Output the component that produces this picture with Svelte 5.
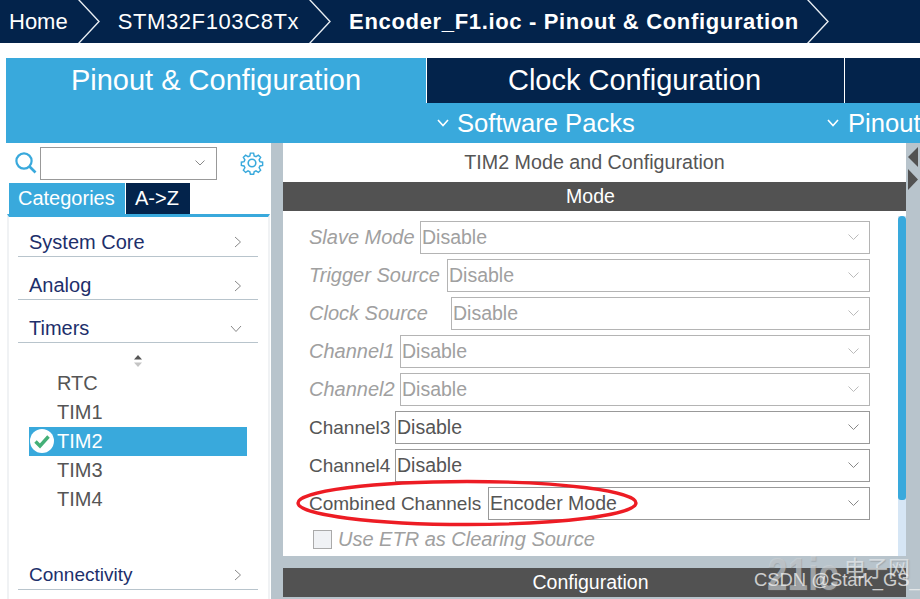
<script>
  const crumbs = [
    { label: "Home", cls: "" },
    { label: "STM32F103C8Tx", cls: "chip" },
    { label: "Encoder_F1.ioc - Pinout & Configuration", cls: "bold" },
  ];

  const timers = ["RTC", "TIM1", "TIM2", "TIM3", "TIM4"];

  // labelWidth puts the select where STM32CubeMX leaves it for that row
  const modeRows = [
    { label: "Slave Mode", value: "Disable", labelWidth: 111, off: true },
    { label: "Trigger Source", value: "Disable", labelWidth: 138, off: true },
    { label: "Clock Source", value: "Disable", labelWidth: 142, off: true },
    { label: "Channel1", value: "Disable", labelWidth: 91, off: true },
    { label: "Channel2", value: "Disable", labelWidth: 91, off: true },
    { label: "Channel3", value: "Disable", labelWidth: 86 },
    { label: "Channel4", value: "Disable", labelWidth: 86 },
    { label: "Combined Channels", value: "Encoder Mode", labelWidth: 179 },
  ];
</script>

<div class="page">
  <nav class="crumbs">
    {#each crumbs as crumb}
      <span class="crumb {crumb.cls}">{crumb.label}</span>
      <svg class="crumb-arrow" width="22" height="43" viewBox="0 0 22 43">
        <path d="M0 -1 L21 21.5 L0 44" fill="none" stroke="#e8edf2" stroke-width="1.4" />
      </svg>
    {/each}
  </nav>

  <div class="tabs">
    <div class="tab active">Pinout &amp; Configuration</div>
    <div class="tab clock">Clock Configuration</div>
    <div class="tab rest"></div>
  </div>

  <div class="subbar">
    <svg class="sub-chev" width="12" height="8" viewBox="0 0 12 8">
      <path d="M1 1 L6 6.5 L11 1" fill="none" stroke="#fff" stroke-width="1.6" />
    </svg>
    <span class="sub-label packs">Software Packs</span>
    <svg class="sub-chev second" width="12" height="8" viewBox="0 0 12 8">
      <path d="M1 1 L6 6.5 L11 1" fill="none" stroke="#fff" stroke-width="1.6" />
    </svg>
    <span class="sub-label">Pinout</span>
  </div>

  <div class="body">
    <aside class="side">
      <div class="search">
        <svg width="22" height="22" viewBox="0 0 22 22">
          <circle cx="9" cy="9" r="7.6" fill="none" stroke="#39a9dc" stroke-width="2.2" />
          <path d="M14.5 14.5 L20.5 20.5" stroke="#39a9dc" stroke-width="2.6" />
        </svg>
        <div class="search-box">
          <svg width="10" height="6" viewBox="0 0 10 6">
            <path d="M0.5 0.5 L5 5 L9.5 0.5" fill="none" stroke="#888" stroke-width="1" />
          </svg>
        </div>
        <svg class="gear" width="24" height="24" viewBox="0 0 24 24">
          <g fill="none" stroke="#39a9dc" stroke-width="1.6">
            <circle cx="12" cy="12" r="3.8" />
            <path d="M10.2 1 h3.6 l0.6 3.1 l2 0.9 l2.7 -1.7 l2.5 2.5 l-1.7 2.7 l0.9 2 l3 0.6 v3.6 l-3 0.6 l-0.9 2 l1.7 2.7 l-2.5 2.5 l-2.7 -1.7 l-2 0.9 l-0.6 2.9 h-3.6 l-0.6 -2.9 l-2 -0.9 l-2.7 1.7 l-2.5 -2.5 l1.7 -2.7 l-0.9 -2 l-3 -0.6 v-3.6 l3 -0.6 l0.9 -2 l-1.7 -2.7 l2.5 -2.5 l2.7 1.7 l2 -0.9 z" transform="translate(1.2 1.2) scale(0.9)" />
          </g>
        </svg>
      </div>

      <div class="side-tabs">
        <span class="side-tab on">Categories</span>
        <span class="side-tab">A-&gt;Z</span>
      </div>

      <div class="tree">
        <div class="group first">
          <span>System Core</span>
          <svg width="8" height="12" viewBox="0 0 8 12"><path d="M1 1 L6.5 6 L1 11" fill="none" stroke="#888" stroke-width="1" /></svg>
        </div>
        <div class="group">
          <span>Analog</span>
          <svg width="8" height="12" viewBox="0 0 8 12"><path d="M1 1 L6.5 6 L1 11" fill="none" stroke="#888" stroke-width="1" /></svg>
        </div>
        <div class="group">
          <span>Timers</span>
          <svg width="12" height="8" viewBox="0 0 12 8"><path d="M1 1 L6 6.5 L11 1" fill="none" stroke="#888" stroke-width="1" /></svg>
        </div>

        <svg class="sort" width="10" height="12" viewBox="0 0 10 12">
          <path d="M5 0 L9 4.5 H1 Z" fill="#555" />
          <path d="M5 12 L9 7.5 H1 Z" fill="#c4c4c4" />
        </svg>

        <ul class="items">
          {#each timers as name}
            <li class:selected={name === "TIM2"}>
              {#if name === "TIM2"}
                <svg class="check" width="24" height="24" viewBox="0 0 24 24">
                  <circle cx="12" cy="12" r="12" fill="#fff" />
                  <path d="M5.5 12.5 L10 17 L18.5 7.5" fill="none" stroke="#45b078" stroke-width="3.4" />
                </svg>
              {/if}
              {name}
            </li>
          {/each}
        </ul>

        <div class="group connectivity">
          <span>Connectivity</span>
          <svg width="8" height="12" viewBox="0 0 8 12"><path d="M1 1 L6.5 6 L1 11" fill="none" stroke="#888" stroke-width="1" /></svg>
        </div>
      </div>
    </aside>

    <main class="main">
      <div class="title">TIM2 Mode and Configuration</div>
      <div class="section">Mode</div>
      <div class="mode">
        <div class="form">
          {#each modeRows as row}
            <div class="row" class:off={row.off}>
              <span class="row-label" style="width: {row.labelWidth}px">{row.label}</span>
              <div class="select">
                <span>{row.value}</span>
                <svg width="11" height="7" viewBox="0 0 11 7">
                  <path d="M0.5 0.5 L5.5 5.5 L10.5 0.5" fill="none" stroke={row.off ? "#bbb" : "#888"} stroke-width="1" />
                </svg>
              </div>
            </div>
          {/each}
          <label class="etr">
            <span class="box"></span>
            <span>Use ETR as Clearing Source</span>
          </label>
        </div>
        <div class="scroll"><div class="thumb"></div></div>
      </div>
      <div class="section config">Configuration</div>
    </main>

    <div class="strip">
      <svg width="12" height="44" viewBox="0 0 12 44">
        <path d="M11 0 V20 L1 10 Z" fill="#525252" />
        <path d="M1 22 V43 L11 32.5 Z" fill="#525252" />
      </svg>
    </div>
  </div>

  <!-- annotation and watermarks over the screenshot -->
  <svg class="ring" width="346" height="50" viewBox="0 0 346 50">
    <ellipse cx="173" cy="25" rx="169" ry="21.5" fill="none" stroke="#ed1c24" stroke-width="3.4" />
  </svg>
  <div class="mark-21ic"><b>21ic</b><span>电子网</span></div>
  <div class="mark-csdn">CSDN @Stark_GS_</div>
</div>

<style>
  :global(body) {
    margin: 0;
  }

  .page {
    position: relative;
    width: 920px;
    height: 599px;
    overflow: hidden;
    background: #fff;
    font-family: "Liberation Sans", Arial, sans-serif;
    color: #555;
    display: flex;
    flex-direction: column;
  }

  .crumbs {
    height: 43px;
    flex: none;
    background: #03234b;
    color: #fff;
    display: flex;
    align-items: center;
    font-size: 22px;
    padding-left: 9px;
  }

  .crumb.chip {
    letter-spacing: 0.6px;
  }

  .crumb.bold {
    font-weight: 700;
    letter-spacing: 0.66px;
    margin-right: -2px;
  }

  .crumb-arrow {
    margin: 0 18px 0 10px;
    flex: none;
  }

  .tabs {
    margin: 15px 0 0 6px;
    height: 45px;
    flex: none;
    display: flex;
    font-size: 29px;
    color: #fff;
  }

  .tab {
    display: flex;
    align-items: center;
    justify-content: center;
    padding-bottom: 1px;
    box-sizing: border-box;
  }

  .tab.active {
    width: 421px;
    background: #39a9dc;
    border-right: 1px solid #fff;
  }

  .tab.clock {
    width: 418px;
    padding-right: 2px;
    background: #03234b;
    border-right: 1px solid #fff;
  }

  .tab.rest {
    flex: 1;
    background: #03234b;
  }

  .subbar {
    margin-left: 6px;
    height: 40px;
    flex: none;
    background: #39a9dc;
    color: #fff;
    display: flex;
    align-items: center;
    font-size: 25.6px;
    padding-left: 431px;
  }

  .sub-chev {
    flex: none;
    margin-right: 8px;
  }

  .sub-chev.second {
    margin-right: 9px;
  }

  .sub-label {
    flex: none;
    white-space: nowrap;
  }

  .sub-label.packs {
    width: 370px;
  }

  .body {
    flex: 1;
    display: flex;
    margin-left: 6px;
    min-height: 0;
  }

  .side {
    width: 265px;
    flex: none;
    display: flex;
    flex-direction: column;
  }

  .search {
    display: flex;
    align-items: center;
    height: 40px;
    padding-left: 9px;
  }

  .search-box {
    height: 31px;
    margin-left: 3px;
    border: 1px solid #999;
    display: flex;
    align-items: center;
    justify-content: flex-end;
    padding-right: 11px;
    width: 164px;
  }

  .gear {
    margin-left: 23px;
  }

  .side-tabs {
    display: flex;
    height: 31px;
    margin-left: 3px;
    font-size: 20px;
    color: #fff;
  }

  .side-tab {
    background: #03234b;
    padding: 0 11px 0 9px;
    line-height: 30px;
    margin-left: 1px;
  }

  .side-tab.on {
    width: 116px;
    margin-left: 0;
    padding: 0 0 0 9px;
    box-sizing: border-box;
    background: #39a9dc;
  }

  .tree {
    flex: 1;
    margin: 0 0 0 1px;
    width: 263px;
    box-sizing: border-box;
    border-top: 3px solid #39a9dc;
    border-left: 2px solid #f0f2f4;
    border-right: 2px solid #f0f2f4;
    display: flex;
    flex-direction: column;
    padding: 0 10px 0 9px;
  }

  .group {
    height: 43px;
    flex: none;
    box-sizing: border-box;
    padding: 15px 16px 0 11px;
    border-bottom: 1px solid #b8c4cc;
    display: flex;
    justify-content: space-between;
    align-items: center;
    font-size: 20px;
    color: #1d2f6b;
  }

  .group.first {
    height: 40px;
    padding-top: 11px;
  }

  .sort {
    align-self: center;
    margin: 12px 0 0 -1px;
    flex: none;
  }

  .items {
    list-style: none;
    margin: 2px 0 0;
    padding: 0;
    flex: none;
    height: 191px;
    font-size: 20px;
  }

  .items li {
    height: 29px;
    line-height: 29px;
    width: 218px;
    margin-left: 11px;
    padding-left: 28px;
    box-sizing: border-box;
    display: flex;
    align-items: center;
    position: relative;
  }

  .items li.selected {
    background: #39a9dc;
    color: #fff;
  }

  .check {
    position: absolute;
    left: 1px;
    top: 2px;
  }

  .group.connectivity {
    height: 30px;
    padding-top: 0;
    font-size: 19px;
  }

  .main {
    width: 623px;
    flex: none;
    border-left: 12px solid #b8c4cc;
    display: flex;
    flex-direction: column;
    background: #b8c4cc;
  }

  .title {
    height: 39px;
    flex: none;
    background: #fff;
    text-align: center;
    font-size: 19.7px;
    line-height: 38px;
  }

  .section {
    height: 29px;
    flex: none;
    background: #525252;
    color: #fff;
    text-align: center;
    font-size: 19.5px;
    line-height: 29px;
    padding-right: 8px;
    box-sizing: border-box;
  }

  .mode {
    height: 345px;
    flex: none;
    background: #fff;
    display: flex;
  }

  .form {
    flex: 1;
    padding: 10px 28px 0 26px;
    display: flex;
    flex-direction: column;
    gap: 5px;
  }

  .row {
    display: flex;
    height: 33px;
    align-items: center;
    font-size: 19px;
  }

  .row-label {
    flex: none;
    white-space: nowrap;
  }

  .row.off .row-label {
    font-style: italic;
    font-size: 20px;
    color: #a0a0a0;
  }

  .select {
    flex: 1;
    height: 33px;
    box-sizing: border-box;
    border: 1px solid #999;
    display: flex;
    align-items: center;
    justify-content: space-between;
    padding: 0 10px 0 1px;
    font-size: 19.5px;
  }

  .row.off .select {
    color: #a0a0a0;
    border-color: #b4b4b4;
  }

  .etr {
    display: flex;
    align-items: center;
    font-size: 20px;
    font-style: italic;
    color: #a0a0a0;
    height: 19px;
    margin: 5px 0 0 4px;
    gap: 6px;
  }

  .box {
    width: 19px;
    height: 19px;
    box-sizing: border-box;
    background: #f0f2f5;
    border: 1px solid #aaa;
  }

  .scroll {
    width: 8px;
    flex: none;
    margin-top: 5px;
    background: #d6e6f5;
  }

  .thumb {
    height: 284px;
    background: #39a9dc;
    border-radius: 4px 4px 3px 3px;
  }

  .section.config {
    margin-top: 12px;
  }

  .strip {
    width: 14px;
    flex: none;
    background: #b8c4cc;
    padding: 4px 0 0 1px;
    box-sizing: border-box;
  }

  .ring {
    position: absolute;
    left: 294px;
    top: 478px;
  }

  .mark-21ic {
    position: absolute;
    left: 767px;
    top: 550px;
    width: 143px;
    display: flex;
    justify-content: space-between;
    color: rgba(205, 210, 214, 0.62);
    text-shadow: 1px 1px 1px rgba(110, 110, 110, 0.3);
  }

  .mark-21ic b {
    font-size: 46px;
    line-height: 48px;
    width: 72px;
    transform: scaleX(0.8);
    transform-origin: left top;
  }

  .mark-21ic span {
    font-family: "Noto Sans CJK SC", sans-serif;
    font-size: 22px;
    line-height: 32px;
    color: rgba(228, 232, 235, 0.75);
  }

  .mark-csdn {
    position: absolute;
    left: 754px;
    top: 569px;
    font-size: 18.4px;
    line-height: 22px;
    color: rgba(240, 240, 240, 0.8);
  }
</style>
